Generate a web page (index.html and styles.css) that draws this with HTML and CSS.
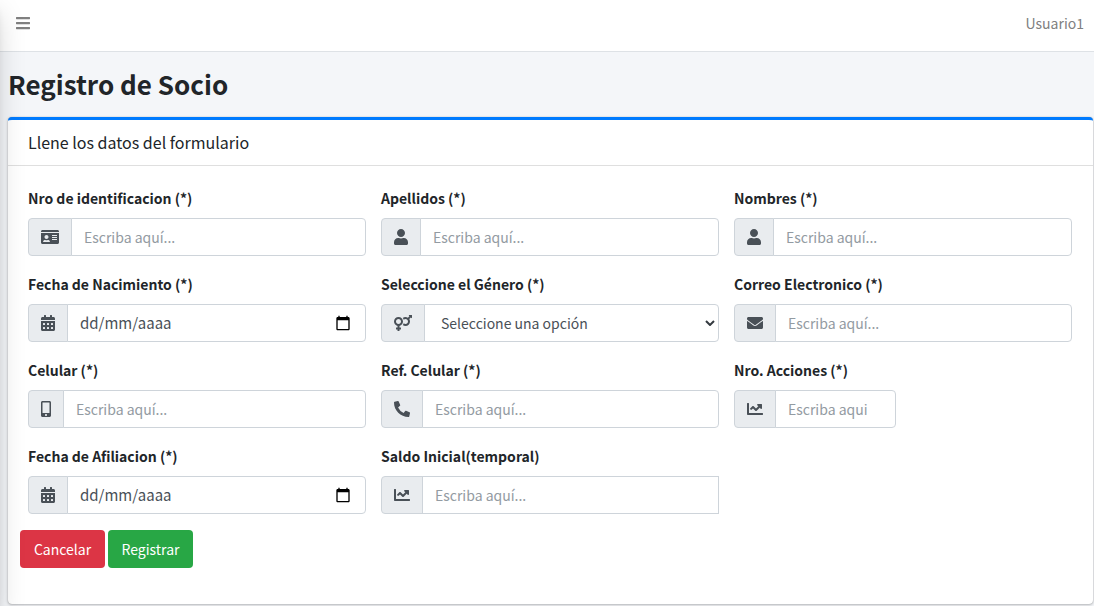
FILE: index.html
```html
<!DOCTYPE html>
<html lang="es">
<head>
<meta charset="utf-8">
<meta name="viewport" content="width=device-width, initial-scale=1">
<title>Registro de Socio</title>
<link rel="stylesheet" href="styles.css">
</head>
<body>
<svg class="sprite" aria-hidden="true">
  <symbol id="i-bars" viewBox="0 0 448 512"><path d="M16 132h416c8.8 0 16-7.2 16-16V76c0-8.800-7.200-16-16-16H16C7.200 60 0 67.200 0 76v40c0 8.800 7.200 16 16 16zm0 160h416c8.800 0 16-7.200 16-16v-40c0-8.800-7.200-16-16-16H16c-8.800 0-16 7.200-16 16v40c0 8.800 7.200 16 16 16zm0 160h416c8.800 0 16-7.200 16-16v-40c0-8.800-7.200-16-16-16H16c-8.800 0-16 7.200-16 16v40c0 8.800 7.200 16 16 16z"/></symbol>
  <symbol id="i-id" viewBox="0 0 576 512"><path fill-rule="evenodd" d="M528 32H48C21.500 32 0 53.500 0 80v16h576V80c0-26.500-21.500-48-48-48zM0 432c0 26.500 21.500 48 48 48h480c26.500 0 48-21.500 48-48V128H0v304zM360 192h144c4.400 0 8 3.600 8 8v16c0 4.400-3.600 8-8 8H360c-4.400 0-8-3.600-8-8v-16c0-4.400 3.600-8 8-8zm0 64h144c4.400 0 8 3.600 8 8v16c0 4.400-3.600 8-8 8H360c-4.400 0-8-3.600-8-8v-16c0-4.400 3.600-8 8-8zm0 64h144c4.400 0 8 3.600 8 8v16c0 4.400-3.600 8-8 8H360c-4.400 0-8-3.600-8-8v-16c0-4.400 3.600-8 8-8zM176 192c35.300 0 64 28.700 64 64s-28.700 64-64 64-64-28.700-64-64 28.700-64 64-64zM67.100 396.200C75.500 370.500 99.600 352 128 352h8.200c12.300 5.100 25.700 8 39.800 8s27.600-2.900 39.800-8h8.200c28.400 0 52.500 18.500 60.900 44.200 3.200 9.900-5.200 19.800-15.600 19.800H82.700c-10.400 0-18.800-10-15.600-19.800z"/></symbol>
  <symbol id="i-user" viewBox="0 0 448 512"><path d="M224 256c70.700 0 128-57.300 128-128S294.700 0 224 0 96 57.300 96 128s57.300 128 128 128zm89.600 32h-16.700c-22.200 10.200-46.900 16-72.900 16s-50.600-5.800-72.900-16h-16.700C60.200 288 0 348.200 0 422.400V464c0 26.500 21.500 48 48 48h352c26.500 0 48-21.500 48-48v-41.600c0-74.200-60.200-134.400-134.400-134.400z"/></symbol>
  <symbol id="i-calendar" viewBox="0 0 448 512"><path fill-rule="evenodd" d="M0 464c0 26.500 21.500 48 48 48h352c26.500 0 48-21.500 48-48V192H0v272zM76 256h40q12 0 12 12v40q0 12-12 12H76q-12 0-12-12v-40q0-12 12-12zm128 0h40q12 0 12 12v40q0 12-12 12h-40q-12 0-12-12v-40q0-12 12-12zm128 0h40q12 0 12 12v40q0 12-12 12h-40q-12 0-12-12v-40q0-12 12-12zM76 384h40q12 0 12 12v40q0 12-12 12H76q-12 0-12-12v-40q0-12 12-12zm128 0h40q12 0 12 12v40q0 12-12 12h-40q-12 0-12-12v-40q0-12 12-12zm128 0h40q12 0 12 12v40q0 12-12 12h-40q-12 0-12-12v-40q0-12 12-12zM400 64h-48V16c0-8.800-7.200-16-16-16h-32c-8.800 0-16 7.200-16 16v48H160V16c0-8.800-7.200-16-16-16h-32c-8.800 0-16 7.200-16 16v48H48C21.500 64 0 85.500 0 112v48h448v-48c0-26.500-21.500-48-48-48z"/></symbol>
  <symbol id="i-gender" viewBox="0 0 576 512"><path d="M564 0h-79c-10.700 0-16 12.900-8.500 20.500l16.900 16.900-48.700 48.700C422.500 72.100 396.200 64 368 64c-33.700 0-64.600 11.600-89.200 30.900 14 16.700 25 36 32.100 57.100 14.500-14.800 34.700-24 57.100-24 44.100 0 80 35.900 80 80s-35.900 80-80 80c-22.300 0-42.600-9.200-57.100-24-7.100 21.100-18 40.400-32.100 57.100 24.500 19.400 55.500 30.900 89.200 30.900 79.500 0 144-64.500 144-144 0-28.200-8.100-54.500-22.100-76.700l48.700-48.700 16.900 16.900c2.400 2.400 5.400 3.500 8.400 3.500 6.200 0 12.100-4.800 12.100-12V12c0-6.600-5.400-12-12-12zM144 64C64.500 64 0 128.500 0 208c0 68.500 47.900 125.900 112 140.400V400H76c-6.600 0-12 5.400-12 12v40c0 6.600 5.400 12 12 12h36v36c0 6.600 5.400 12 12 12h40c6.600 0 12-5.400 12-12v-36h36c6.600 0 12-5.400 12-12v-40c0-6.600-5.400-12-12-12h-36v-51.600c64.100-14.600 112-71.900 112-140.400 0-79.500-64.500-144-144-144zm0 224c-44.100 0-80-35.900-80-80s35.900-80 80-80 80 35.900 80 80-35.900 80-80 80z"/></symbol>
  <symbol id="i-mail" viewBox="0 0 512 512"><path d="M502.300 190.800c3.900-3.100 9.700-.2 9.700 4.700V400c0 26.500-21.500 48-48 48H48c-26.500 0-48-21.500-48-48V195.600c0-5 5.700-7.800 9.700-4.700 22.400 17.400 52.100 39.500 154.100 113.600 21.100 15.400 56.700 47.800 92.200 47.600 35.700.3 72-32.800 92.300-47.600 102-74.100 131.600-96.300 154-113.700zM256 320c23.200.4 56.600-29.200 73.400-41.400 132.700-96.300 142.800-104.700 173.400-128.700 5.800-4.500 9.200-11.500 9.200-18.900v-19c0-26.500-21.500-48-48-48H48c-26.500 0-48 21.500-48 48v19c0 7.400 3.400 14.300 9.200 18.900 30.600 23.900 40.700 32.400 173.400 128.700 16.800 12.200 50.200 41.800 73.400 41.400z"/></symbol>
  <symbol id="i-mobile" viewBox="0 0 320 512"><path d="M272 0H48C21.500 0 0 21.500 0 48v416c0 26.500 21.500 48 48 48h224c26.500 0 48-21.500 48-48V48c0-26.500-21.500-48-48-48zM160 480c-17.700 0-32-14.300-32-32s14.300-32 32-32 32 14.300 32 32-14.300 32-32 32zm112-108c0 6.600-5.400 12-12 12H60c-6.600 0-12-5.400-12-12V60c0-6.600 5.400-12 12-12h200c6.600 0 12 5.400 12 12v312z"/></symbol>
  <symbol id="i-phone" viewBox="0 0 512 512"><path d="M497.390 361.800l-112-48a24 24 0 0 0-28 6.900l-49.600 60.600A370.660 370.660 0 0 1 130.600 204.110l60.600-49.600a23.940 23.940 0 0 0 6.900-28l-48-112A24.160 24.160 0 0 0 122.600.61l-104 24A24 24 0 0 0 0 48c0 256.500 207.900 464 464 464a24 24 0 0 0 23.400-18.600l24-104a24.290 24.290 0 0 0-14.010-27.600z"/></symbol>
  <symbol id="i-chart" viewBox="0 0 512 512"><path d="M496 384H64V80c0-8.840-7.160-16-16-16H16C7.160 64 0 71.160 0 80v336c0 17.670 14.330 32 32 32h464c8.840 0 16-7.160 16-16v-32c0-8.840-7.160-16-16-16zM464 96H345.940c-21.380 0-32.090 25.850-16.970 40.970l32.400 32.400L288 242.750l-73.370-73.370c-12.500-12.500-32.760-12.500-45.250 0l-68.690 68.690c-6.250 6.250-6.250 16.380 0 22.630l22.620 22.620c6.250 6.250 16.380 6.250 22.630 0L192 237.250l73.370 73.370c12.500 12.500 32.760 12.500 45.250 0l96-96 32.400 32.400c15.120 15.120 40.970 4.410 40.970-16.970V112c.01-8.840-7.150-16-15.990-16z"/></symbol>
  <symbol id="i-picker" viewBox="0 0 24 24"><path d="M20 3h-1V1h-2v2H7V1H5v2H4c-1.100 0-2 .9-2 2v16c0 1.100.9 2 2 2h16c1.100 0 2-.9 2-2V5c0-1.100-.9-2-2-2zm0 18H4V8h16v13z"/></symbol>
  <symbol id="i-down" viewBox="0 0 10 6"><path d="M1 1l4 4 4-4" fill="none" stroke="currentColor" stroke-width="2"/></symbol>
</svg>

<aside class="drawer" aria-hidden="true"></aside>

<header class="topbar">
  <button class="menu" type="button" aria-label="Menú"><svg class="icon w14"><use href="#i-bars"/></svg></button>
  <a class="user" href="#">Usuario1</a>
</header>

<main class="content">
  <h1 class="title">Registro de Socio</h1>
  <section class="card">
    <header class="card-header"><h2 class="card-title">Llene los datos del formulario</h2></header>
    <form class="card-body">
      <div class="fields">
        <div class="field">
          <label for="ident">Nro de identificacion (*)</label>
          <div class="group"><span class="addon"><svg class="icon w18"><use href="#i-id"/></svg></span><input class="control" id="ident" type="text" placeholder="Escriba aquí..."></div>
        </div>
        <div class="field">
          <label for="apellidos">Apellidos (*)</label>
          <div class="group"><span class="addon"><svg class="icon w14"><use href="#i-user"/></svg></span><input class="control" id="apellidos" type="text" placeholder="Escriba aquí..."></div>
        </div>
        <div class="field">
          <label for="nombres">Nombres (*)</label>
          <div class="group"><span class="addon"><svg class="icon w14"><use href="#i-user"/></svg></span><input class="control" id="nombres" type="text" placeholder="Escriba aquí..."></div>
        </div>
        <div class="field">
          <label for="nacimiento">Fecha de Nacimiento (*)</label>
          <div class="group"><span class="addon"><svg class="icon w14"><use href="#i-calendar"/></svg></span><div class="control date"><input class="date-text" id="nacimiento" type="text" inputmode="numeric" placeholder="dd/mm/aaaa"><button class="picker" type="button" aria-label="Abrir calendario"><svg class="icon w16"><use href="#i-picker"/></svg></button></div></div>
        </div>
        <div class="field">
          <label for="genero">Seleccione el Género (*)</label>
          <div class="group"><span class="addon"><svg class="icon w18"><use href="#i-gender"/></svg></span><div class="select"><select class="control" id="genero"><option>Seleccione una opción</option><option>Femenino</option><option>Masculino</option></select><svg class="arrow"><use href="#i-down"/></svg></div></div>
        </div>
        <div class="field">
          <label for="correo">Correo Electronico (*)</label>
          <div class="group"><span class="addon"><svg class="icon w16"><use href="#i-mail"/></svg></span><input class="control" id="correo" type="email" placeholder="Escriba aquí..."></div>
        </div>
        <div class="field">
          <label for="celular">Celular (*)</label>
          <div class="group"><span class="addon"><svg class="icon w10"><use href="#i-mobile"/></svg></span><input class="control" id="celular" type="tel" placeholder="Escriba aquí..."></div>
        </div>
        <div class="field">
          <label for="ref">Ref. Celular (*)</label>
          <div class="group"><span class="addon"><svg class="icon w16"><use href="#i-phone"/></svg></span><input class="control" id="ref" type="tel" placeholder="Escriba aquí..."></div>
        </div>
        <div class="field">
          <label for="acciones">Nro. Acciones (*)</label>
          <div class="group half"><span class="addon"><svg class="icon w16"><use href="#i-chart"/></svg></span><input class="control" id="acciones" type="number" placeholder="Escriba aqui"></div>
        </div>
        <div class="field">
          <label for="afiliacion">Fecha de Afiliacion (*)</label>
          <div class="group"><span class="addon"><svg class="icon w14"><use href="#i-calendar"/></svg></span><div class="control date"><input class="date-text" id="afiliacion" type="text" inputmode="numeric" placeholder="dd/mm/aaaa"><button class="picker" type="button" aria-label="Abrir calendario"><svg class="icon w16"><use href="#i-picker"/></svg></button></div></div>
        </div>
        <div class="field">
          <label for="saldo">Saldo Inicial(temporal)</label>
          <div class="group"><span class="addon"><svg class="icon w16"><use href="#i-chart"/></svg></span><input class="control square" id="saldo" type="text" placeholder="Escriba aquí..."></div>
        </div>
      </div>
      <div class="actions">
        <button class="btn cancel" type="button">Cancelar</button>
        <button class="btn submit" type="submit">Registrar</button>
      </div>
    </form>
  </section>
</main>
</body>
</html>
```
FILE: styles.css
```css
*, *::before, *::after { box-sizing: border-box; }

body {
  margin: 0;
  min-height: 100vh;
  background: #f4f6f9;
  color: #212529;
  font: 14px/24px "Noto Sans CJK SC", "Noto Sans", sans-serif;
  overflow-x: hidden;
}

.sprite { display: none; }
.icon { display: block; height: 16px; fill: currentColor; }
.w10 { width: 10px; }
.w14 { width: 14px; }
.w16 { width: 16px; }
.w18 { width: 18px; }

/* Collapsed side drawer: only its shadow reaches the page */
.drawer {
  position: fixed;
  top: 0;
  bottom: 0;
  left: -254px;
  width: 250px;
  z-index: 5;
  pointer-events: none;
  box-shadow: 0 14px 28px rgba(0, 0, 0, .2), 0 10px 10px rgba(0, 0, 0, .12);
}

.topbar {
  display: flex;
  align-items: center;
  justify-content: space-between;
  height: 52px;
  padding: 0 10px 6px 16px;
  background: #fff;
  border-bottom: 1px solid #dee2e6;
}
.menu { padding: 0; border: 0; background: none; color: #808080; }
.user { color: #808080; text-decoration: none; }

.content { padding: 0 0 0 8px; }
.title { margin: 0; padding: 15px 0 17px; font-size: 26px; line-height: 33px; font-weight: 700; }

.card {
  background: #fff;
  border-top: 3px solid #007bff;
  border-radius: 4px;
  box-shadow: 0 0 1px rgba(0, 0, 0, .3), 0 1px 3px rgba(0, 0, 0, .25);
  margin-right: 1px;
}
.card-header { padding: 10px 20px 11px; border-bottom: 1px solid #dfdfdf; }
.card-title { margin: 0; font-size: 15px; line-height: 24px; font-weight: 400; }
.card-title { font-size: 16px; }
.card-body { padding: 20px 21px 36px 20px; }

.fields { display: grid; grid-template-columns: repeat(3, minmax(0, 1fr)); gap: 16px 15px; }
.field { display: flex; flex-direction: column; gap: 8px; }
.field label { font-weight: 700; }

.group { display: flex; height: 38px; }
.half { width: calc(50% - 7px); }
.addon {
  display: flex;
  align-items: center;
  padding: 0 12px;
  background: #e9ecef;
  border: 1px solid #ced4da;
  border-radius: 4px 0 0 4px;
  color: #495057;
}
.control {
  flex: 1;
  min-width: 0;
  width: 100%;
  height: 38px;
  margin: 0 0 0 -1px;
  padding: 0 12px;
  background: #fff;
  border: 1px solid #ced4da;
  border-radius: 0 4px 4px 0;
  color: #495057;
  font: inherit;
}
.square { border-radius: 0; }
.control::placeholder { color: #939ba2; opacity: 1; }

.date { display: flex; align-items: center; padding: 0 14px 0 12px; }
.date-text { flex: 1; min-width: 0; padding: 0; border: 0; background: none; color: #495057; font: inherit; font-size: 15px; }
.date-text::placeholder { color: #495057; opacity: 1; }
.picker { padding: 0; border: 0; background: none; color: #000; }

.select { flex: 1; display: grid; align-items: center; margin-left: -1px; }
.select > * { grid-area: 1 / 1; }
.select .control { appearance: none; margin: 0; padding: 0 24px 0 16px; }
.arrow { justify-self: end; width: 10px; height: 6px; margin-right: 4px; color: #343a40; pointer-events: none; }

.actions { display: flex; gap: 3px; margin: 16px 0 0 -8px; }
.btn {
  height: 38px;
  padding: 0 13px;
  border: 0;
  border-radius: 4px;
  color: #fff;
  font: inherit;
  font-size: 14px;
  min-width: 85px;
}
.cancel { background: #dc3545; }
.submit { background: #28a745; }
```
